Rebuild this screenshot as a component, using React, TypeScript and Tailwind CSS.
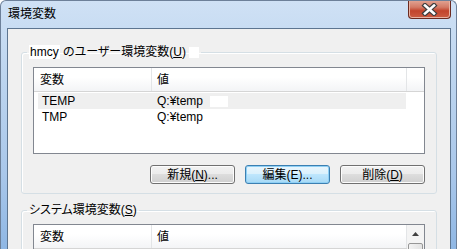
import React from "react";

const FONT = "font-['Liberation_Sans','Noto_Sans_CJK_JP',sans-serif] [font-feature-settings:'palt']";

function Btn({ children, def }: { children: React.ReactNode; def?: boolean }) {
  return (
    <div
      className={
        "w-[85px] h-[19px] rounded-[3px] border flex items-center justify-center text-[12px] leading-[14px] " +
        (def
          ? "border-[#3c7fb1] bg-[linear-gradient(180deg,#eaf6fd_0%,#d9f0fc_50%,#bee6fd_50%,#a7d9f5_100%)] shadow-[inset_0_0_0_1px_#8fd0f5]"
          : "border-[#707070] bg-[linear-gradient(180deg,#f2f2f2_0%,#ebebeb_50%,#dddddd_50%,#cfcfcf_100%)] shadow-[inset_0_0_0_1px_#fcfcfc]")
      }
    >
      {children}
    </div>
  );
}

function Header({ withScroll }: { withScroll?: boolean }) {
  return (
    <div className="h-[24px] flex border-b border-[#d5d5d5] bg-[linear-gradient(180deg,#ffffff_0%,#ffffff_40%,#f3f4f6_100%)] text-[12px] shrink-0">
      <div className="w-[118px] border-r border-[#e3e5e7] pl-[6px] flex items-center">変数</div>
      <div className="w-[255px] border-r border-[#e3e5e7] pl-[5px] flex items-center">値</div>
      {!withScroll && <div className="flex-1" />}
    </div>
  );
}

export default function App() {
  return (
    <div
      className={
        "w-[457px] h-[249px] overflow-hidden flex flex-col rounded-t-[6px] border-l border-t border-r border-[#6d8099] bg-[linear-gradient(180deg,#cfe1f5_0%,#bdd5ef_30%,#a9c7ea_70%,#8fb7e4_100%)] text-black " +
        FONT
      }
    >
      {/* title bar */}
      <div className="h-[27px] flex items-start shrink-0">
        <div className="pl-[7px] pt-[6px] text-[12px] leading-[14px] text-black">環境変数</div>
        <div className="ml-auto mr-[5px] -mt-px w-[43px] h-[19px] rounded-b-[4px] border border-t-0 border-[#6b2a20] bg-[linear-gradient(180deg,#e3a796_0%,#d37a66_40%,#c2442c_60%,#cc5c42_100%)] flex items-center justify-center shadow-[inset_0_0_0_1px_#e8b2a2]">
          <svg width="17" height="13" viewBox="0 0 17 13">
            <path d="M4 2.5 L13 10.5 M13 2.5 L4 10.5" stroke="#3d3d3d" strokeWidth="5" strokeLinecap="square" />
            <path d="M4 2.5 L13 10.5 M13 2.5 L4 10.5" stroke="#ffffff" strokeWidth="2.6" strokeLinecap="square" />
          </svg>
        </div>
      </div>

      <div className="flex-1 flex min-h-0">
        <div className="w-[6px] shrink-0" />
        <div className="flex-1 min-h-0 overflow-hidden border-l border-t border-r border-[#5d7590] bg-[#f0f0f0] pl-[13px] pr-[13px]">
          {/* user group */}
          <fieldset className="mt-[17px] border border-[#d5dfe5] rounded-[3px] px-[11px] pt-[8px] pb-[9px] shadow-[inset_1px_1px_0_#ffffff]">
            <legend className="-ml-[6px] px-[2px] leading-[13px] text-[12px]">
              <span className="bg-white px-px">hmcy</span> のユーザー環境変数(<span className="underline">U</span>)
              <span className="inline-block align-middle ml-[3px] w-[10px] h-[11px] bg-white" />
            </legend>
            <div className="h-[87px] border border-[#828790] bg-white flex flex-col">
              <Header />
              <div className="mt-px pl-[4px] text-[12px]">
                <div className="h-[16px] w-[368px] flex items-center bg-[#efefef]">
                  <div className="w-[119px] pl-[4px]">TEMP</div>
                  <div className="flex items-center">
                    Q:¥temp
                    <span className="inline-block ml-[7px] w-[18px] h-[11px] bg-white" />
                  </div>
                </div>
                <div className="h-[16px] w-[368px] flex items-center">
                  <div className="w-[119px] pl-[4px]">TMP</div>
                  <div>Q:¥temp</div>
                </div>
              </div>
            </div>
            <div className="flex justify-end gap-[10px] mt-[11px]">
              <Btn>
                新規(<span className="underline">N</span>)...
              </Btn>
              <Btn def>編集(E)...</Btn>
              <Btn>
                削除(<span className="underline">D</span>)
              </Btn>
            </div>
          </fieldset>

          {/* system group */}
          <fieldset className="mt-[10px] border border-[#d5dfe5] rounded-[3px] px-[11px] pt-[7px] pb-[9px] shadow-[inset_1px_1px_0_#ffffff]">
            <legend className="-ml-[6px] px-[2px] leading-[13px] text-[12px]">
              システム環境変数(<span className="underline">S</span>)
            </legend>
            <div className="h-[87px] border border-[#828790] bg-white flex">
              <div className="flex-1 flex flex-col">
                <Header withScroll />
              </div>
              <div className="w-[17px] flex flex-col bg-[#f4f4f4]">
                <div className="h-[17px] flex items-center justify-center">
                  <svg width="7" height="4" viewBox="0 0 7 4">
                    <path d="M3.5 0 L7 4 L0 4 Z" fill="#404040" />
                  </svg>
                </div>
                <div className="mt-px mx-[1px] h-[40px] rounded-[2px] border border-[#979797] bg-[linear-gradient(90deg,#f3f3f3,#e3e3e3)]" />
              </div>
            </div>
          </fieldset>
        </div>
        <div className="w-[5px] shrink-0" />
      </div>
    </div>
  );
}
